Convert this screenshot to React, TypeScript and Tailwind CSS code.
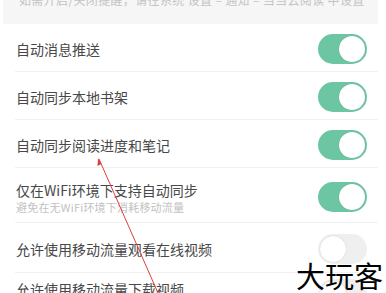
import React from "react";

type Row = {
  title: string;
  sub?: string;
  on: boolean;
  h: string;
};

const rows: Row[] = [
  { title: "自动消息推送", on: true, h: "h-[48px] items-center pt-[3px]" },
  { title: "自动同步本地书架", on: true, h: "h-[48px] items-center pt-[3px]" },
  { title: "自动同步阅读进度和笔记", on: true, h: "h-[48px] items-center pt-[3px]" },
  {
    title: "仅在WiFi环境下支持自动同步",
    sub: "避免在无WiFi环境下消耗移动流量",
    on: true,
    h: "h-[55px] items-center pt-[3px]",
  },
  { title: "允许使用移动流量观看在线视频", on: false, h: "h-[50px] items-center pt-[3px]" },
  { title: "允许使用移动流量下载视频", on: false, h: "h-[50px] items-start pt-[6px]" },
];

const Toggle = ({ on }: { on: boolean }) => (
  <div
    className={
      on
        ? "w-[49px] h-[30px] rounded-full bg-[#6cc6a4] flex items-center justify-end pr-[2px]"
        : "w-[49px] h-[30px] rounded-full bg-[#efefef] flex items-center justify-start pl-[2px]"
    }
  >
    <div className="w-[26px] h-[26px] rounded-full bg-white shadow-[0_0_1px_rgba(0,0,0,0.25)]" />
  </div>
);

const App = () => {
  return (
    <div className="relative w-[386px] h-[293px] overflow-hidden bg-white font-['Noto_Sans_CJK_SC','Noto_Sans',sans-serif]">
      {/* notice band */}
      <div className="ml-[3px] w-[375px] h-[24px] bg-[#f6f6f6] overflow-hidden">
        <p className="-mt-[8px] pl-[16px] text-[12px] leading-[16px] tracking-[0.35px] text-[#c4c4c4] whitespace-nowrap">
          如需开启/关闭提醒，请往系统 设置 – 通知 – 当当云阅读 中设置
        </p>
      </div>

      {/* settings list */}
      <div className="ml-[15px] w-[363px] flex flex-col">
        {rows.map((r) => (
          <div
            key={r.title}
            className={`${r.h} flex justify-between pr-[11px] border-b border-[#f1f1f1]`}
          >
            <div className="flex flex-col pl-px">
              <span className="text-[14px] leading-[20px] text-[#484848]">{r.title}</span>
              {r.sub && (
                <span className="text-[11px] leading-[14px] tracking-[0.2px] text-[#c2c2c2]">{r.sub}</span>
              )}
            </div>
            <Toggle on={r.on} />
          </div>
        ))}
      </div>

      {/* red annotation arrow */}
      <svg className="absolute inset-0 pointer-events-none" width="386" height="293">
        <line x1="99" y1="159" x2="158" y2="293" stroke="#d94040" strokeWidth="1" />
        <path d="M98 158 L97.5 166 L101.5 164 Z" fill="#d94040" />
      </svg>

      {/* watermark */}
      <div className="absolute right-[3px] bottom-[2px] text-[29px] leading-[32px] font-normal text-black">
        大玩客
      </div>
    </div>
  );
};

export default App;
